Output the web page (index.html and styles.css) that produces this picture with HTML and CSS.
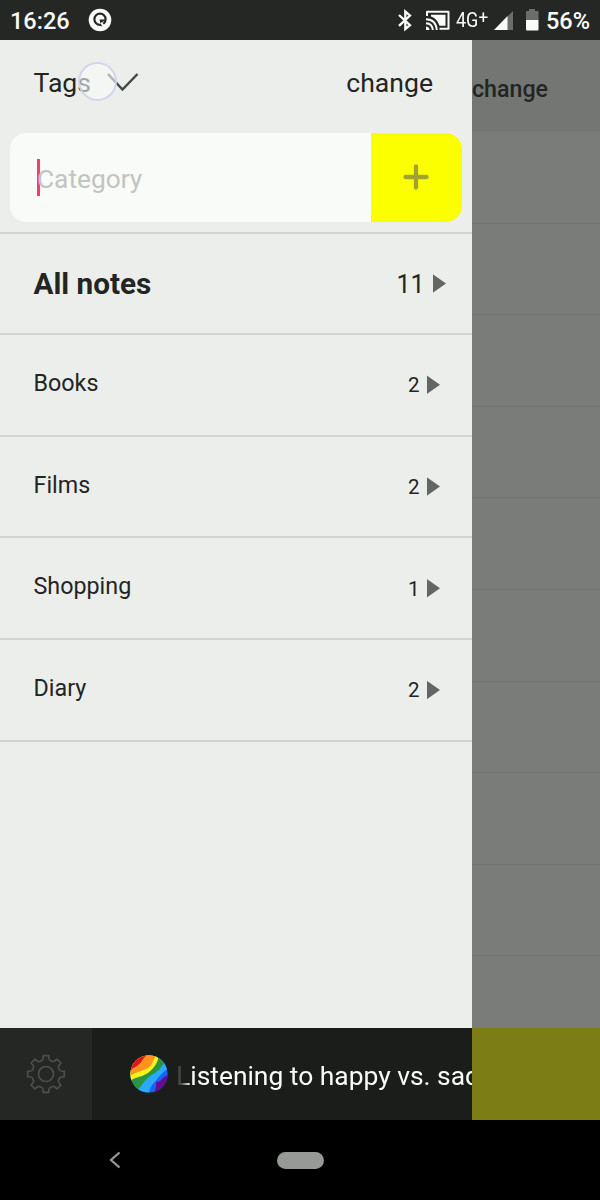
FILE: index.html
```html
<!DOCTYPE html>
<html lang="en">
<head>
<meta charset="utf-8">
<title>Notes</title>
<link rel="stylesheet" href="styles.css">
</head>
<body>
<div class="phone">
  <header class="status">
    <span class="clock">16:26</span>
    <svg class="app-icon" width="24" height="24" viewBox="0 0 24 24"><circle cx="12" cy="12" r="11.3" fill="#fafcf9"/><circle cx="12" cy="11.2" r="5.6" fill="none" stroke="#252725" stroke-width="2.2"/><path d="M11.500 11.500h6.800l-4 2.400 1.200 4-2.200.7z" fill="#252725"/><path d="M14 14l3.200 4.600-2 1.200-2.800-4.600z" fill="#fafcf9"/></svg>
    <svg class="status-icons" width="142" height="40" viewBox="398 0 142 40">
      <path d="M399 15L410 25.200L405.300 29V11.500L410 15.500L399 25.800" fill="none" stroke="#fafcf9" stroke-width="2.300"/>
      <path d="M427 16v-4.200h21.500v17h-9" fill="none" stroke="#fafcf9" stroke-width="2" stroke-linejoin="round"/>
      <path d="M431 14.800h14.500v11h-6q-2.500-7.500-8.500-9.300z" fill="#fafcf9"/>
      <path d="M426 26.500q3.300.2 3.500 3.500H426z" fill="#fafcf9"/>
      <path d="M426 23.200q6.300.3 6.800 6.800M426 19.200q10 .3 10.800 10.800" fill="none" stroke="#fafcf9" stroke-width="1.900"/>
      <path d="M507 17l6-6v19h-6z" fill="#6b6d6b"/><path d="M494 30l13.500-14v14z" fill="#fafcf9"/>
      <path d="M526 11h3V9h6v2h3.500v9H526z" fill="#6b6d6b"/><path d="M526 20h12.500v9.500a1 1 0 0 1-1 1H527a1 1 0 0 1-1-1z" fill="#fafcf9"/>
    </svg>
    <span class="network">4G<span class="plus-mark">+</span></span>
    <span class="battery">56%</span>
  </header>

  <main class="screen">
    <section class="drawer">
      <div class="drawer-head">
        <span class="title">Tags</span>
        <svg class="chevron" width="34" height="24" viewBox="0 0 34 24"><path d="M3 3l14.500 15.500L32.500 3" fill="none" stroke="#454745" stroke-width="2.500"/></svg>
        <span class="change">change</span>
        <i class="touch"></i>
      </div>
      <div class="field">
        <div class="input"><i class="caret"></i><span class="placeholder">Category</span></div>
        <div class="add"><svg width="26" height="26" viewBox="0 0 26 26"><path d="M13 2.500v21M2.500 13h21" stroke="#a2a32f" stroke-width="4.300" stroke-linecap="round"/></svg></div>
      </div>
      <div class="row all"><span class="name">All notes</span><span class="count">11</span><i class="arrow"></i></div>
      <div class="row"><span class="name">Books</span><span class="count">2</span><i class="arrow"></i></div>
      <div class="row"><span class="name">Films</span><span class="count">2</span><i class="arrow"></i></div>
      <div class="row"><span class="name">Shopping</span><span class="count">1</span><i class="arrow"></i></div>
      <div class="row"><span class="name">Diary</span><span class="count">2</span><i class="arrow"></i></div>
    </section>
    <section class="behind">
      <div class="behind-head">change</div>
      <div class="line"></div><div class="line"></div><div class="line"></div><div class="line"></div><div class="line"></div><div class="line"></div><div class="line"></div><div class="line"></div><div class="line"></div>
    </section>
  </main>

  <footer class="bar">
    <div class="settings">
      <svg width="42" height="42" viewBox="-21 -21 42 42" fill="none" stroke="#4d4f4d" stroke-width="1.700" stroke-linejoin="round">
        <circle r="7.500"/>
        <path d="M-4.200-13.500Q-3.200-14-3-15.500L-2.700-18.300H2.700L3-15.500Q3.200-14 4.200-13.500L6.500-12.500Q7.700-12.200 8.800-13L11-14.900L14.900-11L13-8.800Q12.200-7.700 12.500-6.500L13.500-4.200Q14-3.200 15.500-3L18.300-2.700V2.700L15.500 3Q14 3.200 13.500 4.200L12.500 6.500Q12.200 7.700 13 8.800L14.900 11L11 14.900L8.800 13Q7.700 12.200 6.500 12.500L4.200 13.500Q3.200 14 3 15.500L2.700 18.300H-2.700L-3 15.500Q-3.200 14-4.200 13.500L-6.500 12.500Q-7.700 12.200-8.800 13L-11 14.900L-14.900 11L-13 8.800Q-12.200 7.700-12.500 6.500L-13.500 4.200Q-14 3.200-15.500 3L-18.300 2.700V-2.700L-15.500-3Q-14-3.200-13.500-4.200L-12.500-6.500Q-12.200-7.700-13-8.800L-14.900-11L-11-14.900L-8.800-13Q-7.700-12.200-6.500-12.500Z"/>
      </svg>
    </div>
    <div class="ticker">
      <svg class="rainbow" width="38" height="38" viewBox="0 0 38 38">
        <clipPath id="disc"><circle cx="19" cy="19" r="18.600"/></clipPath>
        <g clip-path="url(#disc)">
          <path d="M0 0h38v38H0z" fill="#1265fa"/>
          <path d="M0 0h38v14Q35 15 31 19.500T25 27Q21 29 19 38H0z" fill="#2ba9fb"/>
          <path d="M0 0h38v5Q33 8 31 12T23 19Q17 23 14 27T7 36H0z" fill="#2a9440"/>
          <path d="M0 0h29Q28 6 25.500 10T18 18Q13 21 8.500 22T0 26z" fill="#fdf21c"/>
          <path d="M0 0h27Q24 3 22.500 7.500T15 14.500Q11 16 8 17T0 20.500z" fill="#fc941e"/>
          <path d="M0 0h17Q14 2 12.500 5T7 11Q4 12 0 16z" fill="#e5101a"/>
          <path d="M38 20q-5 2-6.500 4.500T26 27q1 4-2 11h14z" fill="#690b91"/>
        </g>
      </svg>
      <span class="track">Listening to happy vs. sad</span>
    </div>
    <div class="accent"></div>
  </footer>

  <nav class="nav">
    <svg class="back" width="14" height="18" viewBox="0 0 14 18"><path d="M11.500 1.500L3 9l8.500 7.500" fill="none" stroke="#9a9c99" stroke-width="2.200"/></svg>
    <i class="home"></i>
  </nav>
</div>
</body>
</html>
```

FILE: styles.css
```css
* { box-sizing: border-box; }
body { margin: 0; background: #000; font-family: Roboto, "Liberation Sans", sans-serif; color: #232523; }
i { display: block; }
svg { display: block; flex: none; }
.phone { width: 600px; height: 1200px; display: flex; flex-direction: column; overflow: hidden; }

.status { height: 40px; flex: none; display: flex; align-items: center; background: #252725; color: #fafcf9; position: relative; padding-left: 10px; line-height: 40px; }
.clock { font-size: 23.5px; font-weight: 500; width: 77px; padding-top: 2px; }
.app-icon { margin-left: 1px; }
.status-icons { margin-left: 286px; }
.network { position: absolute; left: 456px; top: 0; font-size: 20px; transform: scaleX(.9); transform-origin: left; white-space: nowrap; }
.plus-mark { position: relative; top: -3px; font-size: 19px; }
.battery { font-size: 23.5px; font-weight: 500; margin-left: 6px; padding-top: 2px; }

.screen { height: 988px; flex: none; display: flex; }
.drawer { width: 472px; background: #ebeeeb; }
.drawer-head { height: 93px; display: flex; position: relative; padding: 0 39px 0 33.5px; line-height: 32px; font-size: 26.6px; }
.title { width: 71.5px; padding-top: 27px; }
.chevron { margin-top: 31px; }
.change { margin-left: auto; padding-top: 27px; }
.touch { position: absolute; left: 78px; top: 22px; width: 39px; height: 39px; border-radius: 50%; border: 2px solid rgba(204,207,234,.85); background: rgba(250,252,250,.6); }
.field { height: 89px; margin: 0 10px; display: flex; border-radius: 16px; overflow: hidden; background: #f9fbf8; }
.input { width: 360.5px; display: flex; align-items: center; padding-left: 26.5px; font-size: 26.3px; color: #c2c4c1; }
.caret { width: 3.5px; height: 37px; background: #f43e70; margin-right: -3px; }
.placeholder { padding-top: 2px; }
.add { flex: 1; display: grid; place-items: center; padding: 0 1px 1px 0; background: #fcff00; }
.row { height: 101.7px; display: flex; align-items: center; padding: 0 32px 4px 33.5px; border-bottom: 2px solid #d1d4d1; font-size: 23.3px; }
.name { flex: 1; }
.row .count { font-size: 20.5px; margin-right: 7px; padding-top: 5px; }
.arrow { width: 13.5px; height: 19px; background: #646664; clip-path: polygon(0 0, 100% 50%, 0 100%); margin-top: 4px; }
.row.all { height: 103px; margin-top: 10px; border-top: 2px solid #d1d4d1; padding: 0 26px 0 33.5px; font-size: 29.7px; }
.all .name { font-weight: 700; }
.all .count { font-size: 25px; padding-top: 1px; margin-right: 8px; }
.all .arrow { margin-top: 0; }

.behind { flex: 1; background: #7a7c79; }
.behind-head { height: 92px; background: #747673; border-bottom: 1px solid #777976; font-size: 23.2px; font-weight: 500; line-height: 99px; }
.line { height: 91.6px; border-bottom: 1px solid #717370; }

.bar { height: 92px; flex: none; display: flex; }
.settings { width: 92px; display: grid; place-items: center; padding-right: 1px; background: #252725; }
.ticker { width: 380px; display: flex; align-items: center; overflow: hidden; background: #1b1d1a; padding-left: 37.5px; }
.track { margin-left: 8.5px; padding-top: 3px; color: #fafcf9; font-size: 26.4px; white-space: nowrap; -webkit-mask-image: linear-gradient(90deg, rgba(0,0,0,.1), rgba(0,0,0,.25) 6px, #000 14px); mask-image: linear-gradient(90deg, rgba(0,0,0,.1), rgba(0,0,0,.25) 6px, #000 14px); }
.accent { flex: 1; background: #7c7e15; }

.nav { flex: 1; display: flex; align-items: center; background: #000; padding-left: 108px; }
.home { width: 47px; height: 17px; border-radius: 9px; background: #979996; margin-left: 155px; }
```
